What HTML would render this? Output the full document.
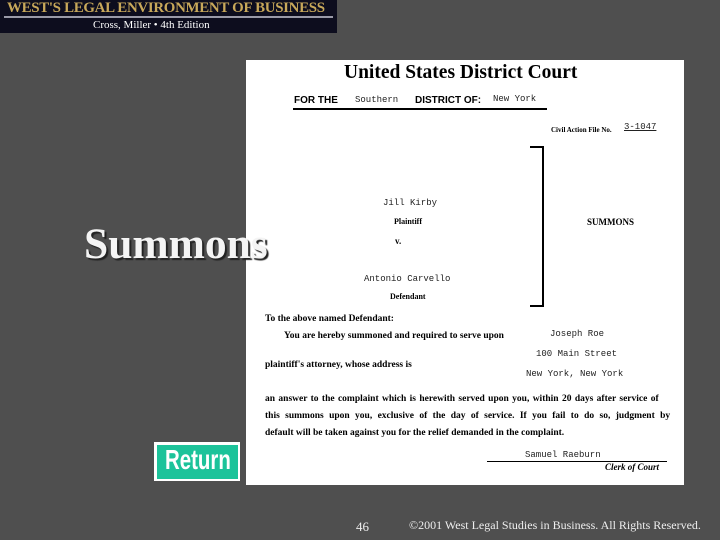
<!DOCTYPE html>
<html><head><meta charset="utf-8"><style>
*{margin:0;padding:0}
body{width:720px;height:540px;background:#4f4f4f;position:relative;overflow:hidden;font-family:"Liberation Serif",serif}
.a{position:absolute;white-space:nowrap}
.m{font-family:"Liberation Mono",monospace;font-size:10px;color:#222}
.b{font-weight:bold;font-size:9px;color:#000}
</style></head><body>
<div class="a" style="left:0;top:0;width:337px;height:33px;background:#0d0d1e"></div>
<div class="a" style="left:7px;top:0px;font-size:14.9px;font-weight:bold;color:#c8a85a;letter-spacing:-0.3px">WEST'S LEGAL ENVIRONMENT OF BUSINESS</div>
<div class="a" style="left:4px;top:16px;width:329px;height:2px;background:#9a9aa8"></div>
<div class="a" style="left:93px;top:19px;font-size:11px;color:#fff">Cross, Miller • 4th Edition</div>

<div class="a" style="left:246px;top:60px;width:438px;height:425px;background:#fff"></div>
<div class="a" style="left:344px;top:62px;font-size:19.5px;font-weight:bold;color:#000">United States District Court</div>
<div class="a" style="left:294px;top:95px;font-family:'Liberation Sans',sans-serif;font-weight:bold;font-size:10px">FOR THE</div>
<div class="a m" style="left:355px;top:95px;font-size:9px">Southern</div>
<div class="a" style="left:415px;top:95px;font-family:'Liberation Sans',sans-serif;font-weight:bold;font-size:10px">DISTRICT OF:</div>
<div class="a m" style="left:493px;top:94px;font-size:9px">New York</div>
<div class="a" style="left:293px;top:108px;width:254px;height:2px;background:#000"></div>
<div class="a b" style="left:551px;top:126px;font-size:7px">Civil Action File No.</div>
<div class="a m" style="left:624px;top:122px;font-size:9px;text-decoration:underline">3-1047</div>
<div class="a" style="left:530px;top:146px;width:12px;height:157px;border:2px solid #000;border-left:none"></div>
<div class="a m" style="left:383px;top:198px;font-size:9px">Jill Kirby</div>
<div class="a b" style="left:394px;top:217px;font-size:8px">Plaintiff</div>
<div class="a b" style="left:587px;top:217px;font-size:9px">SUMMONS</div>
<div class="a b" style="left:395px;top:236px">v.</div>
<div class="a m" style="left:364px;top:274px;font-size:9px">Antonio Carvello</div>
<div class="a b" style="left:390px;top:292px;font-size:8px">Defendant</div>
<div class="a b" style="left:265px;top:314px;font-size:9.5px">To the above named Defendant:</div>
<div class="a b" style="left:284px;top:331px;font-size:9.5px">You are hereby summoned and required to serve upon</div>
<div class="a m" style="left:550px;top:329px;font-size:9px">Joseph Roe</div>
<div class="a m" style="left:536px;top:349px;font-size:9px">100 Main Street</div>
<div class="a b" style="left:265px;top:360px;font-size:9.5px">plaintiff's attorney, whose address is</div>
<div class="a m" style="left:526px;top:369px;font-size:9px">New York, New York</div>
<div class="a b" style="left:265px;top:394px;font-size:9.5px;word-spacing:1px">an answer to the complaint which is herewith served upon you, within 20 days after service of</div>
<div class="a b" style="left:265px;top:411px;font-size:9.5px;word-spacing:3px">this summons upon you, exclusive of the day of service. If you fail to do so, judgment by</div>
<div class="a b" style="left:265px;top:428px;font-size:9.5px">default will be taken against you for the relief demanded in the complaint.</div>
<div class="a m" style="left:525px;top:450px;font-size:9px">Samuel Raeburn</div>
<div class="a" style="left:487px;top:461px;width:180px;height:1px;background:#000"></div>
<div class="a" style="left:605px;top:462px;font-size:9px;font-weight:bold;font-style:italic">Clerk of Court</div>

<div class="a" style="left:84px;top:219px;font-size:43.5px;font-weight:bold;color:#f4f4f4;text-shadow:2px 2px 1px #222">Summons</div>

<div class="a" style="left:154px;top:442px;width:86px;height:39px;background:#fff"></div>
<div class="a" style="left:157px;top:445px;width:81px;height:34px;background:#1cc39a"></div>
<div class="a" style="left:165px;top:444px;font-family:'Liberation Sans',sans-serif;font-weight:bold;font-size:28px;color:#fff;transform:scaleX(0.73);transform-origin:left">Return</div>

<div class="a" style="left:356px;top:519px;font-size:13px;color:#eee">46</div>
<div class="a" style="left:409px;top:518px;font-size:12px;color:#eee">©2001  West Legal Studies in Business. All Rights Reserved.</div>
</body></html>
